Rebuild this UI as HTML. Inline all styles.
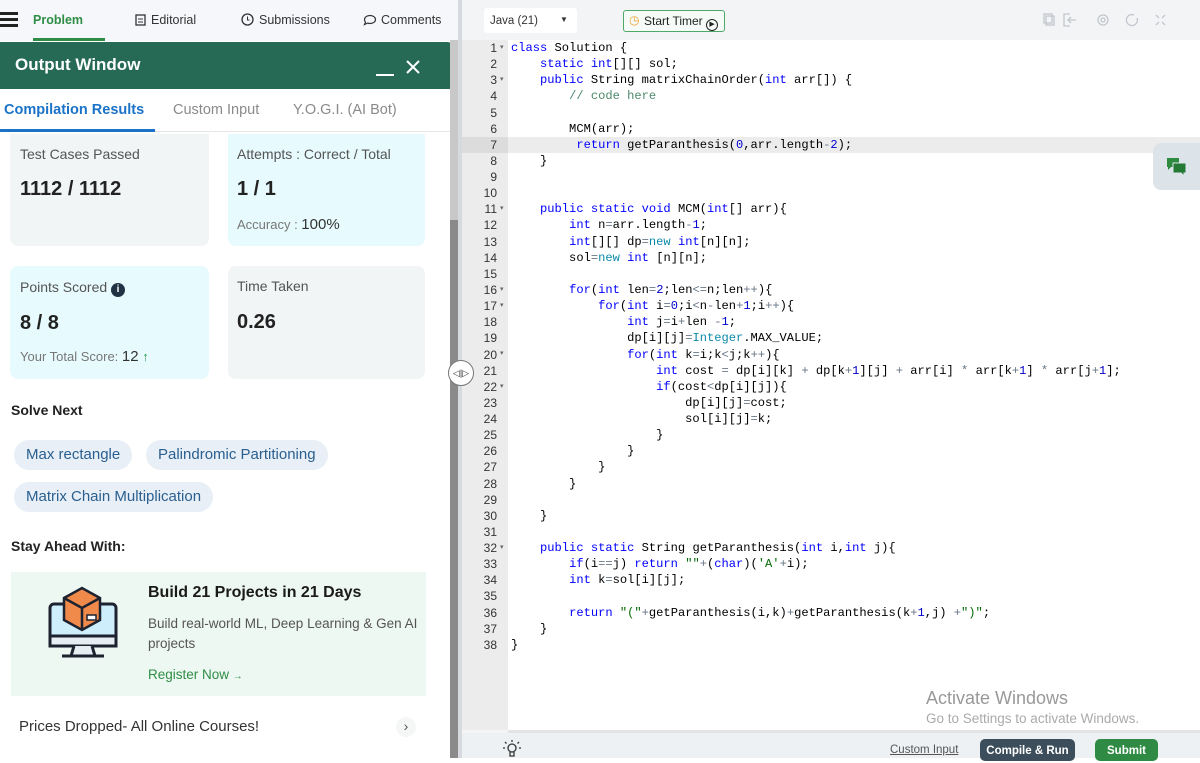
<!DOCTYPE html>
<html><head><meta charset="utf-8">
<style>
*{box-sizing:border-box;margin:0;padding:0}
body{width:1200px;height:758px;overflow:hidden;background:#fff;font-family:"Liberation Sans",sans-serif;position:relative}
.abs{position:absolute}
#left{position:absolute;left:0;top:0;width:460px;height:758px;background:#fff}
#nav{position:absolute;left:0;top:0;width:460px;height:41px;background:#f5f7fb;font-size:12.5px;color:#333}
#nav span{position:absolute;top:13px}
#hdr{position:absolute;left:0;top:42px;width:455px;height:47px;background:#266a55;border-top-right-radius:8px;color:#fff}
.tabs{position:absolute;top:89px;left:0;width:450px;height:43px;border-bottom:1px solid #e6e6e6;font-size:14.5px}
.tabs span{position:absolute;top:13px;color:#8a8a8a}
.card{position:absolute;border-radius:8px}
.lbl{font-size:14px;color:#555;position:absolute}
.big{font-size:20px;font-weight:bold;color:#222;position:absolute}
.chip{position:absolute;height:30px;border-radius:15px;background:#e8eff6;color:#2a5f8f;font-size:15px;line-height:30px;padding:0 12px}
#ed{position:absolute;left:462px;top:0;width:738px;height:758px;background:#f3f4f6}
#gut{position:absolute;left:462px;top:40px;width:46px;height:690px;background:#ececec}
#code{position:absolute;left:508px;top:40px;width:692px;height:690px;background:#fff}
.ln{position:absolute;left:462px;width:35px;text-align:right;font:12px/16.13px "Liberation Sans",sans-serif;color:#333}
.cl{position:absolute;left:511px;font:12.1px/16.13px "Liberation Mono",monospace;color:#000;white-space:pre}
.k{color:#0000ff}.o{color:#687687}.n{color:#0000cd}.c{color:#4c886b}.s{color:#036a07}.t{color:#0b8aa8}
</style></head><body>
<div id="left">
 <div id="nav">
  <div class="abs" style="left:0;top:12px;width:18px;height:3px;background:#222;box-shadow:0 6px 0 #222,0 12px 0 #222"></div>
  <span style="left:33px;color:#2f8d46;font-weight:bold">Problem</span>
  <div class="abs" style="left:33px;top:38px;width:72px;height:3px;background:#2f8d46"></div>
  <span style="left:135px"><svg width="11" height="12" style="vertical-align:-2px;margin-right:5px"><rect x="1" y="1" width="9" height="10" fill="none" stroke="#333" stroke-width="1.3"/><path d="M3 5h5M3 8h5" stroke="#333"/></svg>Editorial</span>
  <span style="left:241px"><svg width="13" height="13" style="vertical-align:-2px;margin-right:5px"><circle cx="6.5" cy="6.5" r="5.5" fill="none" stroke="#333" stroke-width="1.3"/><path d="M6.5 3.5v3.5h2" stroke="#333" fill="none"/></svg>Submissions</span>
  <span style="left:363px"><svg width="14" height="12" style="vertical-align:-2px;margin-right:4px"><path d="M7 1.5c3.3 0 5.5 1.8 5.5 4s-2.2 4-5.5 4c-.9 0-1.7-.1-2.4-.4L1.5 10.5l1-2.2C1.8 7.5 1.5 6.6 1.5 5.5c0-2.2 2.2-4 5.5-4z" fill="none" stroke="#333" stroke-width="1.2"/></svg>Comments</span>
 </div>
 <div id="hdr">
  <div class="abs" style="left:15px;top:13px;font-size:17px;font-weight:bold">Output Window</div>
  <div class="abs" style="left:376px;top:32px;width:18px;height:2px;background:#fff"></div>
  <svg class="abs" style="left:405px;top:17px" width="16" height="16"><path d="M2 2l12 12M14 2L2 14" stroke="#fff" stroke-width="2"/></svg>
 </div>
 <div class="tabs">
  <span style="left:4px;color:#1a73c8;font-weight:bold">Compilation Results</span>
  <span style="left:173px">Custom Input</span>
  <span style="left:293px">Y.O.G.I. (AI Bot)</span>
  <div class="abs" style="left:0;top:40px;width:155px;height:3px;background:#1a73c8"></div>
 </div>
 <div class="card" style="left:10px;top:134px;width:199px;height:112px;background:#f1f5f5;border-radius:0 0 8px 8px">
  <div class="lbl" style="left:10px;top:12px">Test Cases Passed</div>
  <div class="big" style="left:10px;top:44px">1112 / 1112</div>
 </div>
 <div class="card" style="left:228px;top:134px;width:197px;height:112px;background:#e7fafd;border-radius:0 0 8px 8px">
  <div class="lbl" style="left:9px;top:12px">Attempts : Correct / Total</div>
  <div class="big" style="left:9px;top:44px">1 / 1</div>
  <div class="lbl" style="left:9px;top:82px;font-size:13px;color:#777">Accuracy : <span style="font-size:15px;color:#333">100%</span></div>
 </div>
 <div class="card" style="left:10px;top:266px;width:199px;height:113px;background:#e7fafd">
  <div class="lbl" style="left:10px;top:13px">Points Scored <span style="display:inline-block;width:14px;height:14px;border-radius:7px;background:#1f3344;color:#fff;font-size:10px;font-weight:bold;text-align:center;line-height:14px;vertical-align:0">i</span></div>
  <div class="big" style="left:10px;top:46px">8 / 8</div>
  <div class="lbl" style="left:10px;top:82px;font-size:13px;color:#777">Your Total Score: <span style="font-size:15px;color:#333">12</span> <span style="color:#2f9e4f;font-weight:bold">↑</span></div>
 </div>
 <div class="card" style="left:228px;top:266px;width:197px;height:113px;background:#f1f5f5">
  <div class="lbl" style="left:9px;top:12px">Time Taken</div>
  <div class="big" style="left:9px;top:45px">0.26</div>
 </div>
 <div class="abs" style="left:11px;top:402px;font-size:14px;font-weight:bold;color:#222">Solve Next</div>
 <div class="chip" style="left:14px;top:440px">Max rectangle</div>
 <div class="chip" style="left:146px;top:440px">Palindromic Partitioning</div>
 <div class="chip" style="left:14px;top:482px">Matrix Chain Multiplication</div>
 <div class="abs" style="left:11px;top:538px;font-size:14px;font-weight:bold;color:#222">Stay Ahead With:</div>
 <div class="abs" style="left:11px;top:572px;width:415px;height:124px;background:#eef8f2">
  <svg class="abs" style="left:37px;top:12px" width="72" height="74" viewBox="0 0 72 74">
   <rect x="2" y="20" width="66" height="42" rx="4" fill="#cfeefb" stroke="#1c2230" stroke-width="3"/>
   <rect x="2" y="52" width="66" height="10" fill="#e6eef3" stroke="#1c2230" stroke-width="3"/>
   <path d="M26 62l-3 10h24l-3-10" fill="#e6eef3" stroke="#1c2230" stroke-width="3"/>
   <path d="M14 72h42" stroke="#1c2230" stroke-width="3"/>
   <path d="M16 14l18-10 18 10v22l-18 10-18-10z" fill="#f08a4b" stroke="#1c2230" stroke-width="2.5"/>
   <path d="M16 14l18 10 18-10M34 24v22" fill="none" stroke="#1c2230" stroke-width="2.5"/>
   <rect x="39" y="31" width="9" height="5" fill="#fff" stroke="#1c2230" stroke-width="1.5"/>
  </svg>
  <div class="abs" style="left:137px;top:12px;font-size:16px;font-weight:bold;color:#1a1a1a">Build 21 Projects in 21 Days</div>
  <div class="abs" style="left:137px;top:42px;width:270px;font-size:13.5px;line-height:20px;color:#555">Build real-world ML, Deep Learning &amp; Gen AI projects</div>
  <div class="abs" style="left:137px;top:95px;font-size:13.5px;color:#2f8d46">Register Now <span style="font-size:10px">→</span></div>
 </div>
 <div class="abs" style="left:19px;top:718px;font-size:15px;color:#333">Prices Dropped- All Online Courses!</div>
 <div class="abs" style="left:396px;top:717px;width:20px;height:20px;border-radius:10px;background:#f5f7f7;color:#555;font-size:14px;text-align:center;line-height:19px">›</div>
 <div class="abs" style="left:450px;top:40px;width:8px;height:180px;background:#c8c8c8"></div>
 <div class="abs" style="left:450px;top:220px;width:8px;height:538px;background:#8a8a8a"></div>
</div>

<div id="ed"></div>
<div class="abs" style="left:458px;top:0;width:4px;height:758px;background:#d6d9dd"></div>
<div class="abs" style="left:484px;top:8px;width:93px;height:25px;background:#fff;border-radius:3px;font-size:11.5px;color:#333;padding:7px 0 0 6px">Java (21)<span style="position:absolute;left:76px;top:7px;font-size:8px">▼</span></div>
<div class="abs" style="left:623px;top:10px;width:102px;height:22px;border:1.5px solid #4ea868;border-radius:3px;background:#f6fbf7;font-size:12px;color:#222;padding:3px 0 0 20px"><span style="position:absolute;left:5px;top:2px;color:#f0a030;font-size:12px">◷</span>Start Timer <span style="display:inline-block;width:12px;height:12px;border:1.2px solid #222;border-radius:6px;font-size:7px;line-height:10px;text-align:center;vertical-align:-1px">▶</span></div>
<svg class="abs" style="left:1040px;top:12px" width="130" height="16" fill="none" stroke="#c2c6cc" stroke-width="1.3">
 <rect x="4" y="2" width="8" height="9"/><rect x="6" y="4" width="8" height="9"/>
 <path d="M30 2h-6v12h6M28 8h8M31 5l-3 3 3 3"/>
 <circle cx="63" cy="8" r="5"/><circle cx="63" cy="8" r="2"/>
 <path d="M94 3a5.5 5.5 0 1 0 3 3"/>
 <path d="M116 3l3 3M125 3l-3 3M116 13l3-3M125 13l-3-3"/>
</svg>
<div id="gut"></div>
<div id="code"></div>
<div class="abs" style="left:462px;top:137px;width:738px;height:16px;background:#ececec"></div>
<div class="abs" style="left:462px;top:137px;width:46px;height:16px;background:#dcdcdc"></div>

<div class="abs" style="left:1153px;top:143px;width:47px;height:47px;background:#dde4e9;border-radius:8px 0 0 8px"></div>
<svg class="abs" style="left:1166px;top:157px" width="22" height="20"><path d="M1 1h12v9H5l-3 3v-3H1z" fill="#2e8b3f"/><path d="M7 6h13v10h-2v3l-3-3H7z" fill="#247a35" stroke="#dde4e9" stroke-width="1"/></svg>

<div class="abs" style="left:448px;top:360px;width:26px;height:26px;border-radius:13px;background:#fff;border:1px solid #777;font-size:9px;text-align:center;line-height:24px;color:#333">◁|▷</div>

<div class="ln" style="top:40px">1</div><div class="ln" style="top:56.1px">2</div><div class="ln" style="top:72.3px">3</div><div class="ln" style="top:88.4px">4</div><div class="ln" style="top:104.5px">5</div><div class="ln" style="top:120.7px">6</div><div class="ln" style="top:136.8px">7</div><div class="ln" style="top:152.9px">8</div><div class="ln" style="top:169px">9</div><div class="ln" style="top:185.2px">10</div><div class="ln" style="top:201.3px">11</div><div class="ln" style="top:217.4px">12</div><div class="ln" style="top:233.6px">13</div><div class="ln" style="top:249.7px">14</div><div class="ln" style="top:265.8px">15</div><div class="ln" style="top:282px">16</div><div class="ln" style="top:298.1px">17</div><div class="ln" style="top:314.2px">18</div><div class="ln" style="top:330.3px">19</div><div class="ln" style="top:346.5px">20</div><div class="ln" style="top:362.6px">21</div><div class="ln" style="top:378.7px">22</div><div class="ln" style="top:394.9px">23</div><div class="ln" style="top:411px">24</div><div class="ln" style="top:427.1px">25</div><div class="ln" style="top:443.3px">26</div><div class="ln" style="top:459.4px">27</div><div class="ln" style="top:475.5px">28</div><div class="ln" style="top:491.6px">29</div><div class="ln" style="top:507.8px">30</div><div class="ln" style="top:523.9px">31</div><div class="ln" style="top:540px">32</div><div class="ln" style="top:556.2px">33</div><div class="ln" style="top:572.3px">34</div><div class="ln" style="top:588.4px">35</div><div class="ln" style="top:604.6px">36</div><div class="ln" style="top:620.7px">37</div><div class="ln" style="top:636.8px">38</div>
<div class="abs" style="left:500px;top:40px;font-size:7px;line-height:16.13px;color:#666">▾<br><br>▾<br><br><br><br><br><br><br><br>▾<br><br><br><br><br>▾<br>▾<br><br><br>▾<br><br>▾<br><br><br><br><br><br><br><br><br><br>▾</div>

<div class="cl" style="top:40px"><span class="k">class</span> Solution {</div>
<div class="cl" style="top:56.1px">    <span class="k">static</span> <span class="k">int</span>[][] sol;</div>
<div class="cl" style="top:72.3px">    <span class="k">public</span> String matrixChainOrder(<span class="k">int</span> arr[]) {</div>
<div class="cl" style="top:88.4px">        <span class="c">// code here</span></div>
<div class="cl" style="top:120.7px">        MCM(arr);</div>
<div class="cl" style="top:136.8px">         <span class="k">return</span> getParanthesis(<span class="n">0</span>,arr.length<span class="o">-</span><span class="n">2</span>);</div>
<div class="cl" style="top:152.9px">    }</div>
<div class="cl" style="top:201.3px">    <span class="k">public</span> <span class="k">static</span> <span class="k">void</span> MCM(<span class="k">int</span>[] arr){</div>
<div class="cl" style="top:217.4px">        <span class="k">int</span> n<span class="o">=</span>arr.length<span class="o">-</span><span class="n">1</span>;</div>
<div class="cl" style="top:233.6px">        <span class="k">int</span>[][] dp<span class="o">=</span><span class="t">new</span> <span class="k">int</span>[n][n];</div>
<div class="cl" style="top:249.7px">        sol<span class="o">=</span><span class="t">new</span> <span class="k">int</span> [n][n];</div>
<div class="cl" style="top:282px">        <span class="k">for</span>(<span class="k">int</span> len<span class="o">=</span><span class="n">2</span>;len<span class="o">&lt;=</span>n;len<span class="o">++</span>){</div>
<div class="cl" style="top:298.1px">            <span class="k">for</span>(<span class="k">int</span> i<span class="o">=</span><span class="n">0</span>;i<span class="o">&lt;</span>n<span class="o">-</span>len<span class="o">+</span><span class="n">1</span>;i<span class="o">++</span>){</div>
<div class="cl" style="top:314.2px">                <span class="k">int</span> j<span class="o">=</span>i<span class="o">+</span>len <span class="o">-</span><span class="n">1</span>;</div>
<div class="cl" style="top:330.3px">                dp[i][j]<span class="o">=</span><span class="t">Integer</span>.MAX_VALUE;</div>
<div class="cl" style="top:346.5px">                <span class="k">for</span>(<span class="k">int</span> k<span class="o">=</span>i;k<span class="o">&lt;</span>j;k<span class="o">++</span>){</div>
<div class="cl" style="top:362.6px">                    <span class="k">int</span> cost <span class="o">=</span> dp[i][k] <span class="o">+</span> dp[k<span class="o">+</span><span class="n">1</span>][j] <span class="o">+</span> arr[i] <span class="o">*</span> arr[k<span class="o">+</span><span class="n">1</span>] <span class="o">*</span> arr[j<span class="o">+</span><span class="n">1</span>];</div>
<div class="cl" style="top:378.7px">                    <span class="k">if</span>(cost<span class="o">&lt;</span>dp[i][j]){</div>
<div class="cl" style="top:394.9px">                        dp[i][j]<span class="o">=</span>cost;</div>
<div class="cl" style="top:411px">                        sol[i][j]<span class="o">=</span>k;</div>
<div class="cl" style="top:427.1px">                    }</div>
<div class="cl" style="top:443.3px">                }</div>
<div class="cl" style="top:459.4px">            }</div>
<div class="cl" style="top:475.5px">        }</div>
<div class="cl" style="top:507.8px">    }</div>
<div class="cl" style="top:540px">    <span class="k">public</span> <span class="k">static</span> String getParanthesis(<span class="k">int</span> i,<span class="k">int</span> j){</div>
<div class="cl" style="top:556.2px">        <span class="k">if</span>(i<span class="o">==</span>j) <span class="k">return</span> <span class="s">""</span><span class="o">+</span>(<span class="k">char</span>)(<span class="s">'A'</span><span class="o">+</span>i);</div>
<div class="cl" style="top:572.3px">        <span class="k">int</span> k<span class="o">=</span>sol[i][j];</div>
<div class="cl" style="top:604.6px">        <span class="k">return</span> <span class="s">"("</span><span class="o">+</span>getParanthesis(i,k)<span class="o">+</span>getParanthesis(k<span class="o">+</span><span class="n">1</span>,j) <span class="o">+</span><span class="s">")"</span>;</div>
<div class="cl" style="top:620.7px">    }</div>
<div class="cl" style="top:636.8px">}</div>

<div class="abs" style="left:926px;top:688px;font-size:18px;color:#999">Activate Windows</div>
<div class="abs" style="left:926px;top:711px;font-size:13.5px;color:#aaa">Go to Settings to activate Windows.</div>
<div class="abs" style="left:508px;top:730px;width:692px;height:3px;background:#e2e4e6"></div>
<div class="abs" style="left:462px;top:733px;width:738px;height:25px;background:#eef1f4"></div>
<svg class="abs" style="left:502px;top:739px" width="20" height="19" fill="none" stroke="#333" stroke-width="1.3"><circle cx="10" cy="9" r="4"/><path d="M8 13v4h4v-4M10 1v2M3 3l1.5 1.5M17 3l-1.5 1.5M1 9h2M17 9h2"/></svg>
<div class="abs" style="left:890px;top:744px;font-size:11.5px;color:#555;text-decoration:underline">Custom Input</div>
<div class="abs" style="left:980px;top:739px;width:95px;height:22px;background:#3c4e5b;border-radius:5px;color:#fff;font-size:11.5px;font-weight:bold;text-align:center;line-height:24px">Compile &amp; Run</div>
<div class="abs" style="left:1095px;top:739px;width:63px;height:22px;background:#2f8a43;border-radius:5px;color:#fff;font-size:11.5px;font-weight:bold;text-align:center;line-height:24px">Submit</div>
</body></html>
